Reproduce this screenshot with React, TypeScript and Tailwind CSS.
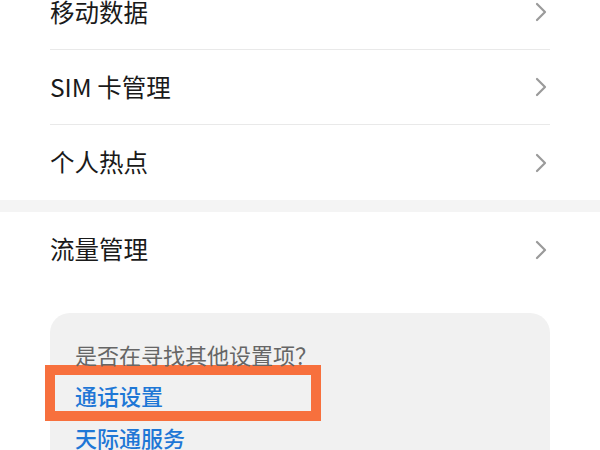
import React from 'react'

const Chevron = () => (
  <svg width="14" height="20" viewBox="0 0 14 20" fill="none" className="shrink-0">
    <path d="M3 2 L11 10 L3 18" stroke="#9a9a9a" strokeWidth="2.2" strokeLinecap="round" strokeLinejoin="round" />
  </svg>
)

const Row = ({ label, divider }: { label: string; divider?: boolean }) => (
  <div
    className={`h-[75px] flex items-center justify-between ${divider ? 'border-b border-[#e9e9e9]' : ''}`}
  >
    <span className="text-[24.5px] leading-none text-[#1a1a1a]">{label}</span>
    <div className="mr-[2px]">
      <Chevron />
    </div>
  </div>
)

const App = () => {
  return (
    <div
      className="w-[600px] h-[450px] overflow-hidden bg-white"
      style={{ fontFamily: '"Noto Sans CJK SC", "Noto Sans", sans-serif' }}
    >
      <div className="-mt-[25px] px-[50px]">
        <Row label="移动数据" divider />
        <Row label="SIM 卡管理" divider />
        <Row label="个人热点" />
      </div>
      <div className="h-[12px] bg-[#f4f4f4]"></div>
      <div className="px-[50px]">
        <Row label="流量管理" />
      </div>
      <div className="mt-[26px] mx-[50px] rounded-[20px] bg-[#f1f1f1] pt-[26px] pb-[20px]">
        <p className="pl-[25px] text-[22px] leading-[30px] text-[#666666]">是否在寻找其他设置项？</p>
        <div className="-mt-[4px] -ml-[5px] w-[276px] h-[56px] border-[10px] border-[#f7703d] flex items-center pl-[20px]">
          <span className="text-[22px] leading-[28px] font-medium text-[#1e77d6] mt-[3px]">通话设置</span>
        </div>
        <p className="mt-[2px] pl-[25px] text-[22px] leading-[28px] font-medium text-[#1e77d6]">天际通服务</p>
      </div>
    </div>
  )
}

export default App
